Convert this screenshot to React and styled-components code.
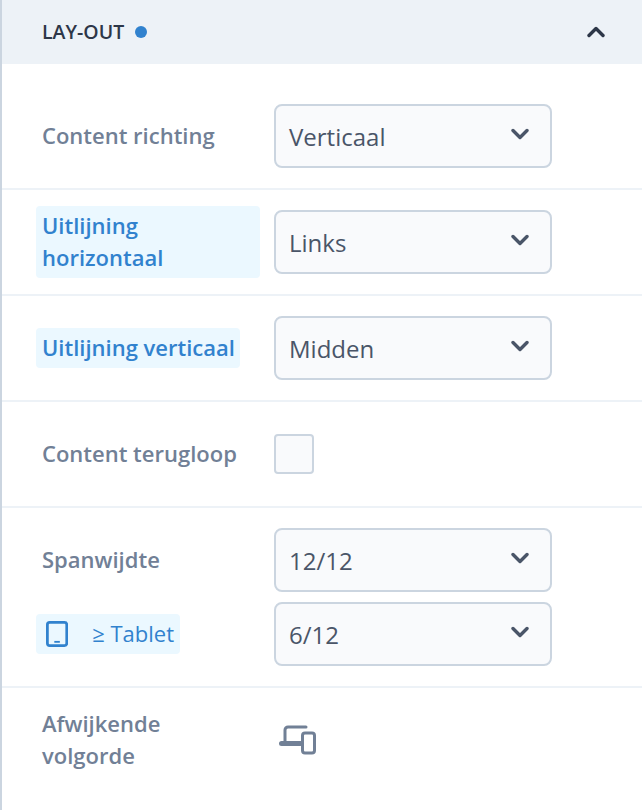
import React from "react";
import styled, { createGlobalStyle } from "styled-components";

const Global = createGlobalStyle`
  html, body { margin: 0; padding: 0; background: #fff; }
  body { font-family: "Open Sans", "Noto Sans", sans-serif; }
`;
const Panel = styled.div`
  width: 642px; height: 810px; box-sizing: border-box; overflow: hidden;
  border-left: 2px solid #cbd5e0; background: #fff;
`;
const Header = styled.div`
  height: 64px; display: flex; align-items: center; background: #edf2f7;
  padding: 0 37px 0 40px; box-sizing: border-box; gap: 11px;
`;
const Title = styled.span`
  font-size: 19.5px; font-weight: 600; color: #2d3748; padding-bottom: 1px;
`;
const Dot = styled.span`
  width: 12px; height: 12px; border-radius: 50%; background: #3182ce;
`;
const Toggle = styled.svg`
  margin-left: auto; width: 18px; height: 12px; fill: none; stroke: #2d3748; stroke-width: 3.4;
  stroke-linecap: round; stroke-linejoin: round; margin-bottom: 1px;
`;
const Body = styled.div`
  padding-top: 20px;
`;
const Row = styled.div`
  display: grid; grid-template-columns: 238px 278px; align-items: center; row-gap: 10px;
  padding: ${p => p.$pad || "20px"} 0 ${p => p.$pad || "20px"} 34px;
  border-bottom: ${p => p.$last ? "0" : "2px solid #edf2f7"};
`;
const Label = styled.div`
  font-size: 22px; line-height: 32px; font-weight: 600; color: #718096;
  padding: 0 6px 2px;
`;
const HighlightLabel = styled(Label)`
  justify-self: start; color: #3182ce; background: #ebf8ff; border-radius: 4px;
  padding: 3px 5px 5px 6px; margin: -4px 0;
  width: ${p => p.$width || "auto"}; box-sizing: border-box;
`;
const Breakpoint = styled.div`
  justify-self: start; display: flex; align-items: center; gap: 24px; width: 144px; height: 40px;
  box-sizing: border-box; padding: 0 6px 0 10px; border-radius: 4px; background: #ebf8ff;
  color: #3182ce; font-size: 22px; line-height: 32px; font-weight: 400; white-space: nowrap;
`;
const BreakpointText = styled.span`
  padding-bottom: 2px;
`;
const Select = styled.div`
  width: 278px; height: 64px; box-sizing: border-box; display: flex; align-items: center;
  justify-content: space-between; padding: 0 21px 0 13px;
  border: 2px solid #cbd5e0; border-radius: 8px; background: #f9fafc;
  color: #4a5568; font-size: 24px;
`;
const Chevron = styled.svg`
  width: 18px; height: 12px; fill: none; stroke: #4a5568; stroke-width: 3.4;
  stroke-linecap: round; stroke-linejoin: round; margin-top: -4px;
`;
const Check = styled.div`
  width: 40px; height: 40px; box-sizing: border-box; border: 2px solid #cbd5e0; border-radius: 4px;
  background: #f9fafc;
`;
const DeviceIcon = styled.svg`
  display: block; width: 38px; height: 32px; margin: 0 0 2px 4px; fill: none; color: #718096;
`;

const Sel = ({ value }) => (
  <Select>
    {value}
    <Chevron viewBox="0 0 18 12"><path d="M2 2.500 9 9.500 16 2.500" /></Chevron>
  </Select>
);

export default function App() {
  return (
    <Panel>
      <Global />
      <Header>
        <Title>LAY-OUT</Title>
        <Dot />
        <Toggle viewBox="0 0 18 12"><path d="M2 9.500 9 2.500 16 9.500" /></Toggle>
      </Header>
      <Body>
        <Row>
          <Label>Content richting</Label>
          <Sel value="Verticaal" />
        </Row>
        <Row>
          <HighlightLabel $width="224px">Uitlijning<br />horizontaal</HighlightLabel>
          <Sel value="Links" />
        </Row>
        <Row>
          <HighlightLabel>Uitlijning verticaal</HighlightLabel>
          <Sel value="Midden" />
        </Row>
        <Row $pad="32px">
          <Label>Content terugloop</Label>
          <Check />
        </Row>
        <Row>
          <Label>Spanwijdte</Label>
          <Sel value="12/12" />
          <Breakpoint>
            <svg width="24" height="28" viewBox="0 0 24 28" fill="none">
              <rect x="1.500" y="1.500" width="21" height="25" rx="2.500" stroke="#3182ce" strokeWidth="3" />
              <path d="M9 22.500h6" stroke="#3182ce" strokeWidth="2" />
            </svg>
            <BreakpointText>≥ Tablet</BreakpointText>
          </Breakpoint>
          <Sel value="6/12" />
        </Row>
        <Row $pad="19px" $last>
          <Label>Afwijkende<br />volgorde</Label>
          <DeviceIcon viewBox="0 0 38 32">
            <path d="M7 19V7A3 3 0 0 1 10 4H28" stroke="currentColor" strokeWidth="3" strokeLinecap="round" />
            <path d="M3.500 20.500h19" stroke="currentColor" strokeWidth="5" strokeLinecap="round" />
            <rect x="24.500" y="10" width="12" height="20" rx="2.500" fill="#fff" stroke="currentColor" strokeWidth="3" />
          </DeviceIcon>
        </Row>
      </Body>
    </Panel>
  );
}
